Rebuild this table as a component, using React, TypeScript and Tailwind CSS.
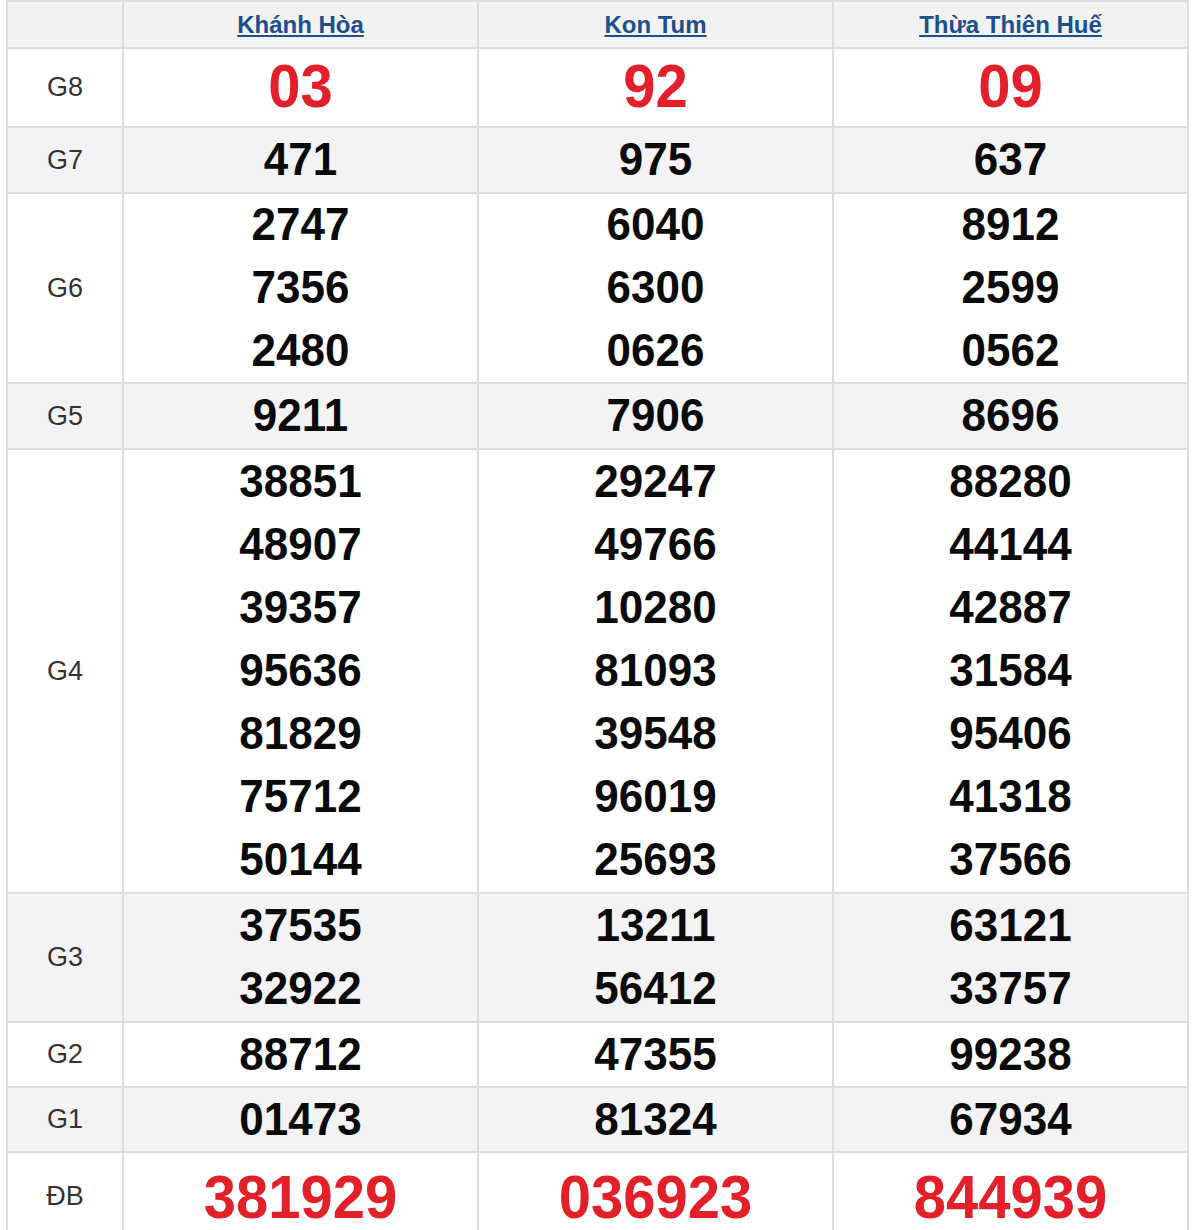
import React from 'react'

type Row = {
  label: string
  height: string
  gray: boolean
  kind: 'big' | 'normal'
  pad: string
  values: string[][]
}

const provinces = ['Khánh Hòa', 'Kon Tum', 'Thừa Thiên Huế']

const rows: Row[] = [
  { label: 'G8', height: 'h-[79px]', gray: false, kind: 'big', pad: 'pb-[5px]', values: [['03'], ['92'], ['09']] },
  { label: 'G7', height: 'h-[66px]', gray: true, kind: 'normal', pad: 'pb-[3px]', values: [['471'], ['975'], ['637']] },
  {
    label: 'G6',
    height: 'h-[190px]',
    gray: false,
    kind: 'normal',
    pad: 'pb-[3px]',
    values: [
      ['2747', '7356', '2480'],
      ['6040', '6300', '0626'],
      ['8912', '2599', '0562'],
    ],
  },
  { label: 'G5', height: 'h-[66px]', gray: true, kind: 'normal', pad: 'pb-[3px]', values: [['9211'], ['7906'], ['8696']] },
  {
    label: 'G4',
    height: 'h-[444px]',
    gray: false,
    kind: 'normal',
    pad: 'pb-[3px]',
    values: [
      ['38851', '48907', '39357', '95636', '81829', '75712', '50144'],
      ['29247', '49766', '10280', '81093', '39548', '96019', '25693'],
      ['88280', '44144', '42887', '31584', '95406', '41318', '37566'],
    ],
  },
  {
    label: 'G3',
    height: 'h-[129px]',
    gray: true,
    kind: 'normal',
    pad: 'pb-[3px]',
    values: [
      ['37535', '32922'],
      ['13211', '56412'],
      ['63121', '33757'],
    ],
  },
  { label: 'G2', height: 'h-[65px]', gray: false, kind: 'normal', pad: 'pb-[3px]', values: [['88712'], ['47355'], ['99238']] },
  { label: 'G1', height: 'h-[65px]', gray: true, kind: 'normal', pad: 'pb-[3px]', values: [['01473'], ['81324'], ['67934']] },
  { label: 'ĐB', height: 'h-[88px]', gray: false, kind: 'big', pad: '', values: [['381929'], ['036923'], ['844939']] },
]

export default function App() {
  return (
    <div className="bg-white w-[1200px] h-[1230px] overflow-hidden font-['Liberation_Sans',Arial,sans-serif]">
      <div className="ml-[6px] w-[1183px] border-l-2 border-t-2 border-[#dedede]">
        {/* header */}
        <div className="flex h-[47px] border-b-2 border-[#dedede] bg-[#f2f2f2]">
          <div className="w-[116px] border-r-2 border-[#dedede]" />
          { provinces.map((p) => (
            <div key={ p } className="w-[355px] border-r-2 border-[#dedede] flex items-center justify-center">
              <a href="#" className="text-[24px] font-bold text-[#1d4f8f] underline underline-offset-2 decoration-2">
                { p }
              </a>
            </div>
          )) }
        </div>

        { rows.map((row) => (
          <div
            key={ row.label }
            className={ `flex ${row.height} border-b-2 border-[#dedede] ${row.gray ? 'bg-[#f3f3f5]' : 'bg-white'}` }
          >
            <div className="w-[116px] border-r-2 border-[#dedede] flex items-center justify-center text-[27px] text-[#333]">
              { row.label }
            </div>
            { row.values.map((col, i) => (
              <div
                key={ i }
                className={ `w-[355px] border-r-2 border-[#dedede] flex flex-col items-center justify-center ${row.pad}` }
              >
                { col.map((v) => (
                  <div
                    key={ v }
                    className={
                      row.kind === 'big'
                        ? 'text-[58px] leading-[63px] font-bold text-[#e3202a] scale-y-[1.05]'
                        : 'text-[44px] leading-[63px] font-bold text-[#0a0a0a] scale-y-[1.06]'
                    }
                  >
                    { v }
                  </div>
                )) }
              </div>
            )) }
          </div>
        )) }
      </div>
    </div>
  )
}
